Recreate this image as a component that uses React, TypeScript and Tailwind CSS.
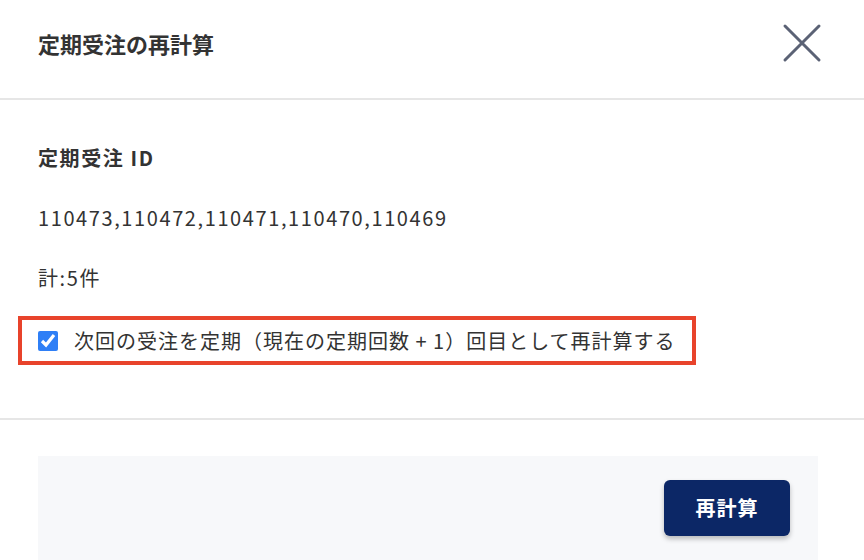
import React from "react";

export default function App() {
  return (
    <div
      className="w-[864px] h-[560px] bg-white overflow-hidden text-[#333333]"
      style={{ fontFamily: '"Noto Sans CJK JP", "Noto Sans", sans-serif' }}
    >
      <div className="h-[100px] flex items-center justify-between pl-[38px] pr-[42px] border-b-2 border-[#e6e6e6]">
        <h1 className="text-[22px] font-bold leading-none text-[#333] mt-[-12px]">定期受注の再計算</h1>
        <svg width="40" height="40" viewBox="0 0 40 40" className="text-[#5b6275] mt-[-12px]">
          <path d="M3 3 L37 37 M37 3 L3 37" stroke="currentColor" strokeWidth="3" strokeLinecap="round" />
        </svg>
      </div>
      <div className="h-[320px] border-b-2 border-[#e6e6e6] pt-[46px] px-[38px]">
        <div className="text-[20px] font-bold tracking-[0.08em] leading-[24px]">定期受注 ID</div>
        <div className="mt-[36px] text-[20px] tracking-[0.08em] leading-[24px]">110473,110472,110471,110470,110469</div>
        <div className="mt-[36px] text-[20px] tracking-[0.08em] leading-[24px]">計:5件</div>
        <label className="mt-[26px] ml-[-20px] w-[678px] h-[49px] border-[4px] border-[#e8432b] flex items-center pl-[16px]">
          <input type="checkbox" defaultChecked className="w-[20px] h-[20px] m-0 accent-[#2f7ff6]" />
          <span className="ml-[16px] text-[20px] tracking-[0.05em] leading-none whitespace-nowrap">次回の受注を定期（現在の定期回数 + 1）回目として再計算する</span>
        </label>
      </div>
      <div className="mt-[36px] ml-[38px] w-[780px] h-[120px] bg-[#f7f8fa] flex justify-end items-start pt-[24px] pr-[28px]">
        <button className="w-[126px] h-[56px] rounded-[6px] bg-[#0c2766] text-white text-[20px] font-bold tracking-[0.05em] shadow-[0_3px_5px_rgba(0,0,0,0.25)]">
          再計算
        </button>
      </div>
    </div>
  );
}
